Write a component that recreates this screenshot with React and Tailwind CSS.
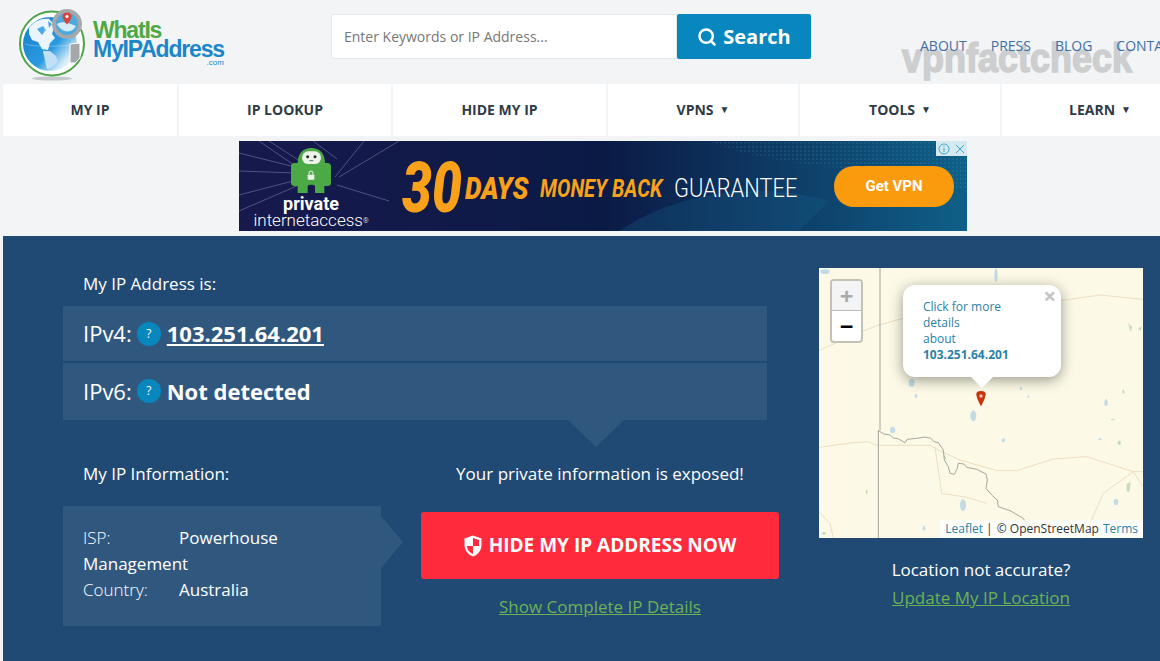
import React from 'react';
import { Search } from 'lucide-react';

const navItems = [
  { label: 'MY IP', width: 'w-[174px]' },
  { label: 'IP LOOKUP', width: 'w-[212px]' },
  { label: 'HIDE MY IP', width: 'w-[213px]' },
  { label: 'VPNS', width: 'w-[190px]', caret: true },
  { label: 'TOOLS', width: 'w-[200px]', caret: true },
  { label: 'LEARN', width: 'w-[196px]', caret: true },
];

const Logo = () => (
  <svg width="72" height="74" viewBox="0 0 72 74" className="shrink-0">
    <defs>
      <linearGradient id="globe" x1="0.1" y1="0.2" x2="0.9" y2="0.9">
        <stop offset="0" stopColor="#1c84cf" />
        <stop offset="0.55" stopColor="#2a9ae0" />
        <stop offset="0.85" stopColor="#cfe8f7" />
        <stop offset="1" stopColor="#f4f9fc" />
      </linearGradient>
    </defs>
    <ellipse cx="34" cy="70.500" rx="20" ry="2" fill="#c6c9cc" />
    <circle cx="34" cy="35.500" r="32" fill="#fdfefe" stroke="#4ca546" strokeWidth="2" />
    <circle cx="32" cy="36" r="27" fill="url(#globe)" />
    <path d="M11 20c5-7 13-10 20-9l6 6-3 9 3 4-5 5-2 7-6-1-4-7-6-2-3-6z" fill="#e9f4fb" />
    <path d="M19 21l6-3 3 4-4 5zM30 13l4 3-3 4z" fill="#4aa8e4" />
    <path d="M25 43l7 0 6 5 2 5-6 6-5 2-2-10z" fill="#bfe0f5" />
    <path d="M7 36c8 3 40 3 52 0M32 9c-9 8-9 46 0 54" fill="none" stroke="#fff" strokeWidth="0.4" opacity="0.7" />
    <circle cx="49" cy="16" r="13" fill="#4fa9dd" stroke="#a6a9ab" strokeWidth="4" />
    <path d="M39 16c5-3 10-2 19 2-3 7-14 8-19-2z" fill="#d6ecf8" />
    <path d="M49 4.500c-3 0-4.500 2-4.500 4 0 3 4.500 8 4.500 8s4.500-5 4.500-8c0-2-1.500-4-4.500-4z" fill="#d8433a" />
    <circle cx="49" cy="8.500" r="1.500" fill="#fff" />
    <path d="M52 36l10-1v15l-5 5h-5z" fill="#a5a8ab" stroke="#fff" strokeWidth="1" />
  </svg>
);

const PiaMascot = () => (
  <svg width="40" height="45" viewBox="0 0 120 135">
    <path d="M20 45C20 15 38 0 61 0s41 15 41 45h8c6 0 10 4 10 10v50c0 6-4 9-10 9h-10v21H72v-20c0-6-22-6-22 0v20H20v-21H10c-6 0-10-3-10-9V55c0-6 4-10 10-10z" fill="#4caa46" />
    <rect x="33" y="10" width="57" height="38" rx="19" fill="#eef3ea" />
    <circle cx="50" cy="26" r="4.500" fill="#1d2b2b" />
    <circle cx="72" cy="26" r="4.500" fill="#1d2b2b" />
    <path d="M55 38h12" stroke="#1d2b2b" strokeWidth="2" />
    <rect x="50" y="80" width="20" height="15" rx="2" fill="#eef3ea" />
    <path d="M54 80v-5a6 6 0 0 1 12 0v5" stroke="#eef3ea" strokeWidth="3" fill="none" />
  </svg>
);

const AdBanner = () => (
  <div className="relative ml-[239px] mt-[5px] flex h-[90px] w-[728px] items-center overflow-hidden bg-gradient-to-r from-[#17194d] via-[#0a1a45] to-[#0e6088] pl-[14px] pr-[13px] text-white">
    <svg className="absolute inset-0" width="728" height="90" viewBox="0 0 728 90">
      <defs>
        <pattern id="dots" width="4" height="4" patternUnits="userSpaceOnUse">
          <circle cx="2" cy="2" r="0.700" fill="#3fa3c9" />
        </pattern>
      </defs>
      <path d="M0 12L56 26M0 54L54 40M30 0L64 22M0 30L56 32M74 0L98 18M125 0L96 36M100 36L160 0M98 44L150 60M20 0L58 26M0 70L60 44" stroke="#a7a2cf" strokeWidth="0.600" opacity="0.7" fill="none" />
      <path d="M470 0C540 30 620 20 728 50V0z" fill="url(#dots)" opacity="0.45" />
      <path d="M380 90C440 50 520 40 590 60L560 90z" fill="#17608a" opacity="0.3" />
    </svg>
    <div className="relative flex w-[116px] shrink-0 flex-col items-center self-start pt-[7px] font-['Roboto',sans-serif]">
      <PiaMascot />
      <span className="mt-[3px] text-[18px] font-bold leading-[16px]">private</span>
      <span className="whitespace-nowrap text-[17px] font-light leading-[16px]">
        internetaccess<sup className="text-[7px]">®</sup>
      </span>
    </div>
    <div className="relative ml-[33px] flex items-center whitespace-nowrap font-['Roboto',sans-serif] italic text-[#f9a11b]">
      <span className="mt-[3px] w-[63px] origin-left scale-x-[0.76] text-[70px] font-black leading-none">30</span>
      <span className="mt-[4px] w-[65px] origin-left scale-x-[0.82] text-[32px] font-black leading-none">DAYS</span>
      <span className="ml-[10px] mt-[4px] w-[123px] origin-left scale-x-[0.77] text-[26px] font-bold leading-none">MONEY BACK</span>
    </div>
    <span className="relative ml-[11px] mt-[4px] w-[124px] origin-left scale-x-[0.84] whitespace-nowrap font-['Roboto',sans-serif] text-[26px] font-light leading-none">GUARANTEE</span>
    <div className="relative ml-auto flex h-[41px] w-[120px] items-center justify-center rounded-[20px] bg-[#f99b0c] font-['Roboto',sans-serif] text-[15px] font-bold">Get VPN</div>
    <div className="absolute right-0 top-0 flex h-[15px] w-[31px] items-center justify-around bg-[#d4eaf0] text-[#3aa5cf]">
      <svg width="12" height="12" viewBox="0 0 12 12" fill="none" stroke="currentColor">
        <circle cx="6" cy="6" r="5" />
        <path d="M6 5v4M6 3v1" />
      </svg>
      <svg width="10" height="10" viewBox="0 0 10 10" stroke="currentColor">
        <path d="M1 1l8 8M9 1l-8 8" />
      </svg>
    </div>
  </div>
);

const QuestionBadge = () => (
  <span className="mx-[5px] flex h-6 w-6 shrink-0 items-center justify-center rounded-full bg-[#0787bd] text-[12px] font-normal text-white">?</span>
);

const MapBackground = () => (
  <svg className="block" width="324" height="270" viewBox="27 24 972 810">
    <rect x="27" y="24" width="972" height="810" fill="#fcfae6" />
    <g fill="none" stroke="#ead6b8" strokeWidth="2.500">
      <path d="M27 272L130 225L200 197L280 175" />
      <path d="M750 122L870 105L999 118" />
      <path d="M27 562L130 548L175 545L200 556L360 556L385 570L450 600L560 632L620 632L730 597L830 590L970 635L999 635" />
      <path d="M375 560L395 700L470 712L530 730" />
      <path d="M970 635L880 700L840 790L830 834" />
      <path d="M970 635L999 680" />
      <path d="M27 755L60 790L70 834" />
    </g>
    <g fill="#c3dbe6">
      <ellipse cx="305" cy="368" rx="9" ry="12" />
      <ellipse cx="490" cy="467" rx="9" ry="16" />
      <ellipse cx="248" cy="510" rx="8" ry="10" />
      <ellipse cx="459" cy="735" rx="9" ry="18" />
      <ellipse cx="888" cy="428" rx="5" ry="10" />
      <ellipse cx="918" cy="726" rx="7" ry="10" />
      <ellipse cx="580" cy="541" rx="5" ry="6" />
      <ellipse cx="558" cy="45" rx="5" ry="20" />
      <ellipse cx="342" cy="805" rx="4" ry="7" />
      <ellipse cx="318" cy="408" rx="4" ry="6" />
      <ellipse cx="45" cy="35" rx="14" ry="7" />
      <ellipse cx="633" cy="386" rx="4" ry="5" />
      <ellipse cx="870" cy="538" rx="5" ry="3" />
      <ellipse cx="655" cy="410" rx="3" ry="4" />
    </g>
    <g fill="#c5dcb4">
      <path d="M955 190l12 12-6 14z" />
      <path d="M985 205l10-6-4 14z" />
      <path d="M950 672l12-6-4 30-8-2z" />
      <path d="M400 585l8 6 2 14z" />
      <ellipse cx="42" cy="820" rx="6" ry="4" />
      <ellipse cx="170" cy="695" rx="3" ry="6" />
      <ellipse cx="928" cy="548" rx="5" ry="6" />
      <ellipse cx="908" cy="478" rx="6" ry="2" />
      <ellipse cx="940" cy="395" rx="3" ry="6" />
    </g>
    <path d="M210 24V510M205 510V834" stroke="#94908c" strokeWidth="2.500" fill="none" />
    <path d="M205 512L222 522L240 525L252 535L262 535L285 548L292 538L320 535L345 531L362 535L372 545L385 548L400 570L403 600L415 620L420 640L433 643L442 625L445 610L462 612L470 622L500 628L528 642L532 660L528 685L545 705L562 720L565 740L600 752L640 775L660 810" stroke="#7d7c78" strokeWidth="2" fill="none" />
    <path d="M513 393c-9 0-14 3-14 10 0 11 14 36 14 36s14-25 14-36c0-7-5-10-14-10z" fill="#c8340f" />
    <circle cx="513" cy="408" r="5" fill="#f7c8b8" />
  </svg>
);

const MapPanel = () => (
  <div className="relative h-[270px] w-[324px] overflow-hidden text-left">
    <MapBackground />
    <div className="absolute left-[11px] top-[11px] w-[33px] overflow-hidden rounded-[4px] border-2 border-[#c4c2b4] bg-white text-center">
      <div className="flex h-[30px] items-center justify-center border-b border-[#bbb] bg-[#f4f4f4] text-[24px] font-bold leading-none text-[#aaa]">+</div>
      <div className="flex h-[30px] items-center justify-center text-[24px] font-bold leading-none text-black">−</div>
    </div>
    <div className="absolute left-[84px] top-[17px] h-[92px] w-[158px] rounded-[12px] bg-white pl-[20px] pt-[14px] text-[12px] leading-[16px] text-[#2a82a8] shadow-[0_3px_14px_rgba(0,0,0,0.4)]">
      <span className="absolute right-[5px] top-[-2px] text-[22px] font-bold leading-[24px] text-[#c3c3c3]">×</span>
      <div>
        Click for more
        <br />
        details
        <br />
        about
      </div>
      <div className="font-bold">103.251.64.201</div>
      <span className="absolute bottom-[-11px] left-[68px] h-0 w-0 border-x-[11px] border-t-[11px] border-x-transparent border-t-white"></span>
    </div>
    <div className="absolute bottom-0 right-0 flex h-[18px] items-center whitespace-nowrap bg-[#ffffffb3] px-[5px] text-[12px] leading-none text-[#333]">
      <span className="text-[#2a82a8]">Leaflet</span>
      <span className="ml-[3px] mr-[4px]">|</span>
      <span>© OpenStreetMap</span>
      <span className="ml-[4px] text-[#2a82a8]">Terms</span>
    </div>
  </div>
);

const App = () => {
  return (
    <div className="relative h-[661px] w-[1160px] overflow-hidden bg-[#f2f4f5] font-['Open_Sans',sans-serif]">
      {/* watermark */}
      <span className="pointer-events-none absolute left-[902px] top-[33px] origin-left scale-x-[0.9] whitespace-nowrap font-['Liberation_Sans',sans-serif] text-[40px] font-bold leading-[50px] text-[#c9cacb] opacity-90 [-webkit-text-stroke:1.5px_#c9cacb]">vpnfactcheck</span>

      {/* Header */}
      <header className="relative flex h-[84px] items-start">
        <div className="ml-[18px] mt-[8px] flex w-[313px] shrink-0 items-start">
          <Logo />
          <div className="ml-[3px] mt-[13px] flex flex-col whitespace-nowrap font-['Liberation_Sans',sans-serif] font-bold leading-none tracking-[-1.2px]">
            <span className="text-[23px] leading-[19px] text-[#4fa846]">WhatIs</span>
            <span className="text-[23px] leading-[19px] text-[#1b86c9]">MyIPAddress</span>
            <span className="self-end text-[8px] font-normal leading-[7px] tracking-normal text-[#1b86c9]">.com</span>
          </div>
        </div>
        <div className="mt-[14px] flex h-[45px] shrink-0">
          <input
            type="text"
            placeholder="Enter Keywords or IP Address..."
            className="h-full w-[346px] rounded-l-[3px] border border-[#e6e8ea] bg-white pl-[12px] text-[14px] text-[#555] placeholder:text-[#777] focus:outline-none"
          />
          <button className="flex h-full w-[134px] items-center justify-center gap-[6px] rounded-[2px] bg-[#0787bd] text-[20px] font-bold text-white">
            <Search size={20} strokeWidth={3} />
            Search
          </button>
        </div>
        <nav className="ml-[109px] mt-[36px] flex shrink-0 gap-[24px] whitespace-nowrap text-[14px] leading-[19px] text-[#3f6fa5]">
          <span>ABOUT</span>
          <span>PRESS</span>
          <span>BLOG</span>
          <span>CONTACT</span>
        </nav>
      </header>

      {/* Main nav */}
      <div className="relative ml-[3px] flex h-[52px] gap-[2px] bg-[#f2f4f5]">
        {navItems.map((item) => (
          <div key={item.label} className={`${item.width} flex shrink-0 items-center justify-center bg-white pb-[1px] text-[14px] font-bold text-[#2f3b47]`}>
            {item.label}
            {item.caret && <span className="ml-[6px] text-[10px]">▼</span>}
          </div>
        ))}
      </div>

      <AdBanner />

      {/* Main panel */}
      <main className="ml-[3px] mt-[5px] flex h-[425px] bg-[#204a74] text-white">
        <section className="ml-[60px] w-[716px] shrink-0">
          <h2 className="ml-[20px] mt-[36px] text-[17px] font-normal leading-[24px]">My IP Address is:</h2>
          <div className="mt-[10px] flex h-[55px] w-[704px] items-center bg-[#30587f] pl-[20px]">
            <span className="text-[22px]">IPv4:</span>
            <QuestionBadge />
            <a href="#" className="ml-[1px] text-[22px] font-bold underline underline-offset-2">103.251.64.201</a>
          </div>
          <div className="mt-[2px] flex h-[57px] w-[704px] items-center bg-[#30587f] pb-[1px] pl-[20px]">
            <span className="text-[22px]">IPv6:</span>
            <QuestionBadge />
            <span className="ml-[1px] text-[22px] font-bold">Not detected</span>
          </div>
          <div className="flex">
            <div className="w-[358px] shrink-0">
              <h2 className="ml-[20px] mt-[42px] text-[17px] font-normal leading-[24px]">My IP Information:</h2>
              <div className="relative mt-[20px] h-[120px] w-[318px] bg-[#30587f] px-[20px] pt-[19px] text-[17px] leading-[26px]">
                <span className="absolute left-full top-[10px] h-0 w-0 border-y-[26px] border-l-[22px] border-y-transparent border-l-[#30587f]"></span>
                <div>
                  <span className="inline-block w-[96px] font-light">ISP:</span>Powerhouse Management
                </div>
                <div>
                  <span className="inline-block w-[96px] font-light">Country:</span>Australia
                </div>
              </div>
            </div>
            <div className="relative w-[358px] shrink-0 text-center">
              <span className="absolute left-[147px] top-0 h-0 w-0 border-x-[28px] border-t-[27px] border-x-transparent border-t-[#30587f]"></span>
              <p className="mt-[42px] text-[17px] leading-[24px]">Your private information is exposed!</p>
              <button className="mt-[26px] flex h-[67px] w-[358px] items-center justify-center gap-[7px] rounded-[3px] bg-[#ff2a3c] text-[19px] font-bold text-white">
                <svg width="18" height="22" viewBox="0 0 18 22">
                  <path d="M9 0.500L17.500 3.500V10c0 5.500-3.500 9.500-8.500 11.500C4 19.500 0.500 15.500 0.500 10V3.500z" fill="#fff" />
                  <path d="M9 3L15 5V11H9zM9 11V19C5.500 17.500 3 14.500 3 11z" fill="#ff2a3c" />
                </svg>
                HIDE MY IP ADDRESS NOW
              </button>
              <a href="#" className="mt-[16px] block text-[17px] leading-[24px] text-[#6cb255] underline">Show Complete IP Details</a>
            </div>
          </div>
        </section>
        <aside className="ml-[40px] mt-[32px] w-[324px] shrink-0 text-center">
          <MapPanel />
          <p className="mt-[20px] text-[17px] leading-[24px]">Location not accurate?</p>
          <a href="#" className="mt-[4px] block text-[17px] leading-[24px] text-[#6cb255] underline">Update My IP Location</a>
        </aside>
      </main>
    </div>
  );
};

export default App;
